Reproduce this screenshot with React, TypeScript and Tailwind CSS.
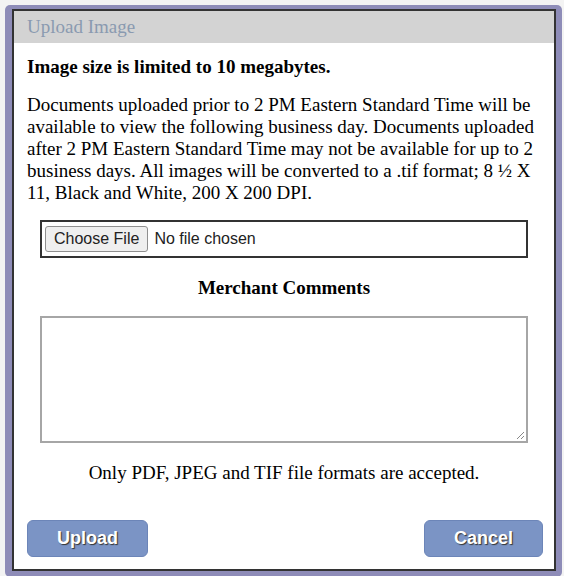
export default function App() {
  return (
    <div className="w-[564px] h-[576px] bg-[#f3f3f3] pt-[5px] pl-[5px] pr-[2px] overflow-hidden">
      <div className="bg-[#8e8cb8] rounded-[5px] pl-[7px] pt-[4px] pr-[6px] pb-[6px]">
        <div className="border-2 border-[#333] bg-white h-[562px] flex flex-col font-['Liberation_Serif',serif] text-black">
          <div className="h-[32px] bg-[#d3d3d3] px-[13px] flex items-center text-[19px] text-[#8a9ab0]">
            Upload Image
          </div>
          <div className="px-[13px] flex flex-col flex-1">
            <p className="mt-[13px] font-bold text-[19px] leading-[22px]">
              Image size is limited to 10 megabytes.
            </p>
            <p className="mt-[16px] text-[19px] leading-[22px]">
              Documents uploaded prior to 2 PM Eastern Standard Time will be available to view the
              following business day. Documents uploaded after 2 PM Eastern Standard Time may not be
              available for up to 2 business days. All images will be converted to a .tif format; 8 ½ X
              11, Black and White, 200 X 200 DPI.
            </p>
            <div className="mt-[16px] mx-[13px] h-[38px] border-2 border-[#333] flex items-center pl-[3px] font-['Liberation_Sans',sans-serif] text-[16px]">
              <span className="h-[26px] px-[8px] flex items-center bg-[#efefef] border border-[#8f8f8f] rounded-[3px] text-[#222]">
                Choose File
              </span>
              <span className="ml-[6px] text-[#222]">No file chosen</span>
            </div>
            <p className="mt-[19px] text-center font-bold text-[19px] leading-[22px]">
              Merchant Comments
            </p>
            <div className="mt-[17px] mx-[13px] h-[127px] border-2 border-[#a6a6a6] relative">
              <svg
                className="absolute right-[1px] bottom-[1px]"
                width="10"
                height="10"
                viewBox="0 0 10 10"
              >
                <path d="M9 2 L2 9 M9 6 L6 9" stroke="#888" strokeWidth="1" />
              </svg>
            </div>
            <p className="mt-[19px] text-center text-[19px] leading-[22px]">
              Only PDF, JPEG and TIF file formats are accepted.
            </p>
            <div className="mt-auto mb-[12px] -mr-[2px] flex justify-between">
              <button className="w-[121px] h-[37px] rounded-[6px] bg-[#7b94c5] border border-[#6c85b8] text-white font-bold text-[18px] font-['Liberation_Sans',sans-serif] [text-shadow:1px_1px_1px_#333]">
                Upload
              </button>
              <button className="w-[119px] h-[37px] rounded-[6px] bg-[#7b94c5] border border-[#6c85b8] text-white font-bold text-[18px] font-['Liberation_Sans',sans-serif] [text-shadow:1px_1px_1px_#333]">
                Cancel
              </button>
            </div>
          </div>
        </div>
      </div>
    </div>
  );
}
